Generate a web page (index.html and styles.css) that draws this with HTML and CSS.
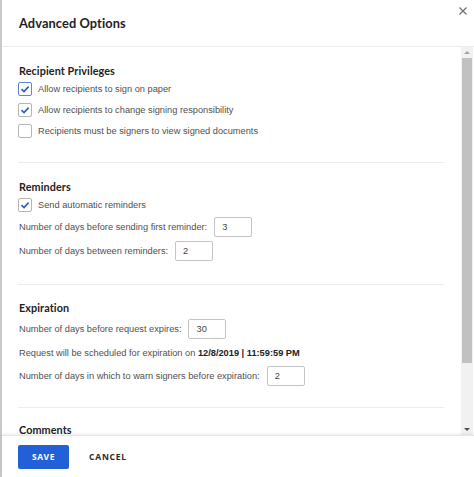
FILE: index.html
```html
<!DOCTYPE html>
<html lang="en">
<head>
<meta charset="utf-8">
<title>Advanced Options</title>
<link rel="stylesheet" href="styles.css">
</head>
<body>
<div class="dialog">
  <header class="dlg-header">
    <h1 class="dlg-title">Advanced Options</h1>
    <button class="close" aria-label="Close">
      <svg width="8" height="8" viewBox="0 0 8 8"><path d="M0.5 0.5L7.5 7.5M7.5 0.5L0.5 7.5" stroke="#6e6e6e" stroke-width="1.2" fill="none"/></svg>
    </button>
  </header>
  <div class="dlg-body">
    <div class="content">
      <section class="section">
        <h2 class="sec-title">Recipient Privileges</h2>
        <label class="check-row"><span class="box checked focus"><svg viewBox="0 0 14 14" width="14" height="14"><path d="M3.5 7.2L6 9.6L10.6 4.6" stroke="#2a5cc2" stroke-width="1.6" fill="none"/></svg></span>Allow recipients to sign on paper</label>
        <label class="check-row"><span class="box checked"><svg viewBox="0 0 14 14" width="14" height="14"><path d="M3.5 7.2L6 9.6L10.6 4.6" stroke="#2a5cc2" stroke-width="1.6" fill="none"/></svg></span>Allow recipients to change signing responsibility</label>
        <label class="check-row"><span class="box"></span>Recipients must be signers to view signed documents</label>
      </section>
      <section class="section">
        <h2 class="sec-title">Reminders</h2>
        <label class="check-row"><span class="box checked"><svg viewBox="0 0 14 14" width="14" height="14"><path d="M3.5 7.2L6 9.6L10.6 4.6" stroke="#2a5cc2" stroke-width="1.6" fill="none"/></svg></span>Send automatic reminders</label>
        <div class="field-row"><span>Number of days before sending first reminder:</span><span class="num">3</span></div>
        <div class="field-row"><span>Number of days between reminders:</span><span class="num">2</span></div>
      </section>
      <section class="section section-exp">
        <h2 class="sec-title">Expiration</h2>
        <div class="field-row first"><span>Number of days before request expires:</span><span class="num">30</span></div>
        <div class="text-row">Request will be scheduled for expiration on <b>12/8/2019 | 11:59:59 PM</b></div>
        <div class="field-row"><span>Number of days in which to warn signers before expiration:</span><span class="num">2</span></div>
      </section>
      <section class="section section-comments">
        <h2 class="sec-title">Comments</h2>
        <div class="comment-box"></div>
      </section>
    </div>
    <div class="scrollbar">
      <div class="sb-btn"><span class="tri-up"></span></div>
      <div class="sb-track">
        <div class="sb-thumb"></div>
      </div>
      <div class="sb-btn"><span class="tri-down"></span></div>
    </div>
  </div>
  <footer class="dlg-footer">
    <button class="btn-save">SAVE</button>
    <button class="btn-cancel">CANCEL</button>
  </footer>
</div>
</body>
</html>
```
FILE: styles.css
```css
* { box-sizing: border-box; }
html, body { margin: 0; padding: 0; }
body {
  width: 474px;
  height: 477px;
  overflow: hidden;
  background: #fff;
  font-family: "Liberation Sans", Arial, sans-serif;
}
.dialog {
  width: 474px;
  height: 477px;
  border-left: 2px solid #c9c9c9;
  display: flex;
  flex-direction: column;
  background: #fff;
}
.dlg-header {
  height: 47px;
  flex: none;
  display: flex;
  align-items: flex-start;
  justify-content: space-between;
  border-bottom: 1px solid #ececec;
}
.dlg-title {
  margin: 14px 0 0 17px;
  font-family: Lato, sans-serif;
  font-weight: 700;
  font-size: 12.8px;
  line-height: 18px;
  letter-spacing: 0.1px;
  color: #1e1e1e;
}
.close {
  border: 0;
  background: none;
  padding: 0;
  margin: 7px 7px 0 0;
  width: 8px;
  height: 8px;
  display: flex;
}
.dlg-body {
  flex: none;
  height: 388px;
  display: flex;
}
.content {
  flex: 1;
  overflow: hidden;
  padding: 0 17px 0 16px;
}
.section {
  padding: 16px 0 21px;
  border-bottom: 1px solid #ececec;
}
.section-exp { padding: 15px 0 19px; }
.section-comments { padding-top: 14px; border-bottom: 0; }
.sec-title {
  margin: 0 0 0 1px;
  font-family: Lato, sans-serif;
  font-weight: 700;
  font-size: 10.8px;
  line-height: 15px;
  letter-spacing: 0.1px;
  color: #222;
}
.check-row {
  height: 21px;
  display: flex;
  align-items: center;
  font-size: 9.25px;
  color: #505050;
}
.box {
  width: 14px;
  height: 14px;
  border: 1px solid #b5b5b5;
  border-radius: 2px;
  margin-right: 6px;
  display: flex;
  align-items: center;
  justify-content: center;
  flex: none;
}
.box svg { margin: -1px; }
.box.focus { border-color: #5f86d6; }
.field-row {
  height: 24px;
  display: flex;
  align-items: center;
  gap: 7px;
  padding-left: 1px;
  font-size: 9.25px;
  color: #505050;
}
.field-row.first { margin-top: 2px; }
.num {
  width: 38px;
  height: 20px;
  border: 1px solid #c4c4c4;
  border-radius: 2px;
  padding-left: 7px;
  display: flex;
  align-items: center;
  color: #444;
}
.text-row {
  height: 23px;
  display: flex;
  align-items: center;
  padding-left: 1px;
  font-size: 9.25px;
  color: #505050;
}
.text-row b { color: #222; margin-left: 2.5px; }
.comment-box { height: 60px; }
.scrollbar {
  width: 12px;
  margin-right: 1px;
  flex: none;
  background: #f1f1f1;
  display: flex;
  flex-direction: column;
}
.sb-btn {
  height: 11px;
  flex: none;
  display: flex;
  align-items: center;
  justify-content: center;
}
.tri-up {
  width: 0; height: 0;
  border-left: 3px solid transparent;
  border-right: 3px solid transparent;
  border-bottom: 3px solid #a3a3a3;
}
.tri-down {
  width: 0; height: 0;
  border-left: 3px solid transparent;
  border-right: 3px solid transparent;
  border-top: 3px solid #505050;
}
.sb-track {
  flex: 1;
  display: flex;
  flex-direction: column;
  padding: 0 1px;
}
.sb-thumb {
  height: 305px;
  background: #c1c1c1;
}
.dlg-footer {
  flex: 1;
  display: flex;
  align-items: center;
  gap: 20px;
  padding: 0 0 0 16px;
  box-shadow: 0 -1px 3px rgba(0,0,0,0.08);
  border-top: 1px solid #e6e6e6;
  position: relative;
}
.btn-save {
  width: 51px;
  height: 24px;
  border: 0;
  border-radius: 2px;
  background: #2160d8;
  color: #fff;
  font-family: "Open Sans", sans-serif;
  font-weight: 700;
  font-size: 8.5px;
  letter-spacing: 0.6px;
  padding: 0;
}
.btn-cancel {
  border: 0;
  background: none;
  padding: 0;
  color: #2b2b2b;
  font-family: "Open Sans", sans-serif;
  font-weight: 700;
  font-size: 8.5px;
  letter-spacing: 0.8px;
}
```
